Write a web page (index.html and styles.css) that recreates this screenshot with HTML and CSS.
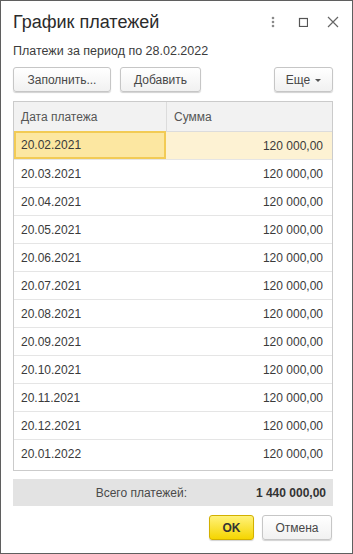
FILE: index.html
```html
<!DOCTYPE html>
<html lang="ru">
<head>
<meta charset="utf-8">
<title>График платежей</title>
<link rel="stylesheet" href="styles.css">
</head>
<body>
<div class="window">
  <div class="titlebar">
    <h1 class="title">График платежей</h1>
    <div class="win-actions">
      <span class="win-btn">
        <svg width="10" height="14" viewBox="0 0 10 14"><circle cx="5" cy="3" r="1.3" fill="#8a8a8a"/><circle cx="5" cy="7" r="1.3" fill="#8a8a8a"/><circle cx="5" cy="11" r="1.3" fill="#8a8a8a"/></svg>
      </span>
      <span class="win-btn">
        <svg width="10" height="10" viewBox="0 0 10 10"><rect x="1.5" y="1.5" width="8" height="8" fill="none" stroke="#555" stroke-width="1.2"/></svg>
      </span>
      <span class="win-btn">
        <svg width="12" height="12" viewBox="0 0 12 12"><path d="M1 1 L11 11 M11 1 L1 11" stroke="#666" stroke-width="1.2" fill="none"/></svg>
      </span>
    </div>
  </div>

  <div class="subtitle">Платежи за период по 28.02.2022</div>

  <div class="toolbar">
    <button class="btn btn-fill">Заполнить...</button>
    <button class="btn btn-add">Добавить</button>
    <button class="btn btn-more">Еще <span class="caret"></span></button>
  </div>

  <div class="grid">
    <div class="grid-head">
      <div class="cell c-date">Дата платежа</div>
      <div class="cell c-sum head-sum">Сумма</div>
    </div>
    <div class="row row-current"><div class="cell c-date cell-active">20.02.2021</div><div class="cell c-sum">120 000,00</div></div>
    <div class="row"><div class="cell c-date">20.03.2021</div><div class="cell c-sum">120 000,00</div></div>
    <div class="row"><div class="cell c-date">20.04.2021</div><div class="cell c-sum">120 000,00</div></div>
    <div class="row"><div class="cell c-date">20.05.2021</div><div class="cell c-sum">120 000,00</div></div>
    <div class="row"><div class="cell c-date">20.06.2021</div><div class="cell c-sum">120 000,00</div></div>
    <div class="row"><div class="cell c-date">20.07.2021</div><div class="cell c-sum">120 000,00</div></div>
    <div class="row"><div class="cell c-date">20.08.2021</div><div class="cell c-sum">120 000,00</div></div>
    <div class="row"><div class="cell c-date">20.09.2021</div><div class="cell c-sum">120 000,00</div></div>
    <div class="row"><div class="cell c-date">20.10.2021</div><div class="cell c-sum">120 000,00</div></div>
    <div class="row"><div class="cell c-date">20.11.2021</div><div class="cell c-sum">120 000,00</div></div>
    <div class="row"><div class="cell c-date">20.12.2021</div><div class="cell c-sum">120 000,00</div></div>
    <div class="row row-last"><div class="cell c-date">20.01.2022</div><div class="cell c-sum">120 000,00</div></div>
  </div>

  <div class="total">
    <span class="total-label">Всего платежей:</span>
    <span class="total-value">1 440 000,00</span>
  </div>

  <div class="footer">
    <button class="btn btn-ok">OK</button>
    <button class="btn btn-cancel">Отмена</button>
  </div>
</div>
</body>
</html>
```

FILE: styles.css
```css
* { box-sizing: border-box; }

html, body {
  margin: 0;
  padding: 0;
  background: #ffffff;
}

body {
  font-family: "Liberation Sans", Arial, sans-serif;
  font-size: 12px;
  color: #3a3a3a;
}

.window {
  width: 353px;
  height: 554px;
  border: 1px solid #5f5f5f;
  padding: 0 19px 0 12px;
  background: #ffffff;
  display: flex;
  flex-direction: column;
}

.titlebar {
  margin-top: 10px;
  height: 22px;
  display: flex;
  align-items: center;
  justify-content: space-between;
  margin-right: -15px;
}

.title {
  margin: 0;
  font-size: 18px;
  line-height: 22px;
  font-weight: normal;
  color: #2b2b2b;
}

.win-actions {
  display: flex;
  align-items: center;
  margin-top: -1px;
}

.win-btn {
  width: 30px;
  height: 22px;
  display: flex;
  align-items: center;
  justify-content: center;
}

.subtitle {
  margin-top: 11px;
  line-height: 15px;
  font-size: 12.5px;
  color: #3c3c3c;
}

.toolbar {
  margin-top: 8px;
  display: flex;
  gap: 9px;
}

.btn {
  height: 25px;
  font-family: "Liberation Sans", Arial, sans-serif;
  font-size: 12px;
  color: #474747;
  background: linear-gradient(#ffffff, #f1f1f1);
  border: 1px solid #c6c6c6;
  border-radius: 3px;
  box-shadow: 0 1px 1px rgba(0, 0, 0, 0.18);
  padding: 0;
  display: flex;
  align-items: center;
  justify-content: center;
}

.btn-fill { width: 98px; }
.btn-add { width: 81px; }

.btn-more {
  width: 59px;
  margin-left: auto;
  gap: 5px;
}

.caret {
  width: 0;
  height: 0;
  border-left: 3px solid transparent;
  border-right: 3px solid transparent;
  border-top: 3px solid #555;
  margin-top: 1px;
}

.grid {
  margin-top: 9px;
  width: 320px;
  border: 1px solid #cbcbcb;
  padding-bottom: 2px;
}

.grid-head {
  display: flex;
  height: 30px;
  background: #f2f2f2;
  border-bottom: 1px solid #dcdcdc;
  color: #555555;
}

.grid-head .cell {
  text-align: left;
}

.head-sum {
  border-left: 1px solid #dcdcdc;
}

.row {
  display: flex;
  height: 28px;
  border-bottom: 1px solid #e5e5e5;
}

.row-last {
  border-bottom: none;
}

.cell {
  display: flex;
  align-items: center;
}

.c-date {
  width: 152px;
  padding-left: 7px;
}

.c-sum {
  flex: 1;
  justify-content: flex-end;
  padding-right: 9px;
}

.grid-head .c-sum {
  justify-content: flex-start;
  padding-left: 7px;
}

.row-current {
  background: #fdf2d3;
}

.cell-active {
  background: #fce7a1;
  border: 2px solid #f2cb55;
  padding-left: 5px;
  margin-top: -1px;
  height: 28px;
}

.total {
  margin-top: 8px;
  height: 27px;
  background: #e3e3e3;
  display: flex;
  align-items: center;
  color: #4a4a4a;
}

.total-label {
  width: 174px;
  text-align: right;
}

.total-value {
  flex: 1;
  text-align: right;
  padding-right: 7px;
  font-weight: bold;
  color: #333;
}

.footer {
  margin-top: 9px;
  display: flex;
  justify-content: flex-end;
  gap: 8px;
  margin-right: 1px;
}

.btn-ok {
  width: 45px;
  background: linear-gradient(#fff27a, #f5d500);
  border-color: #d2b000;
  font-weight: bold;
  color: #333;
}

.btn-cancel {
  width: 70px;
}
```
